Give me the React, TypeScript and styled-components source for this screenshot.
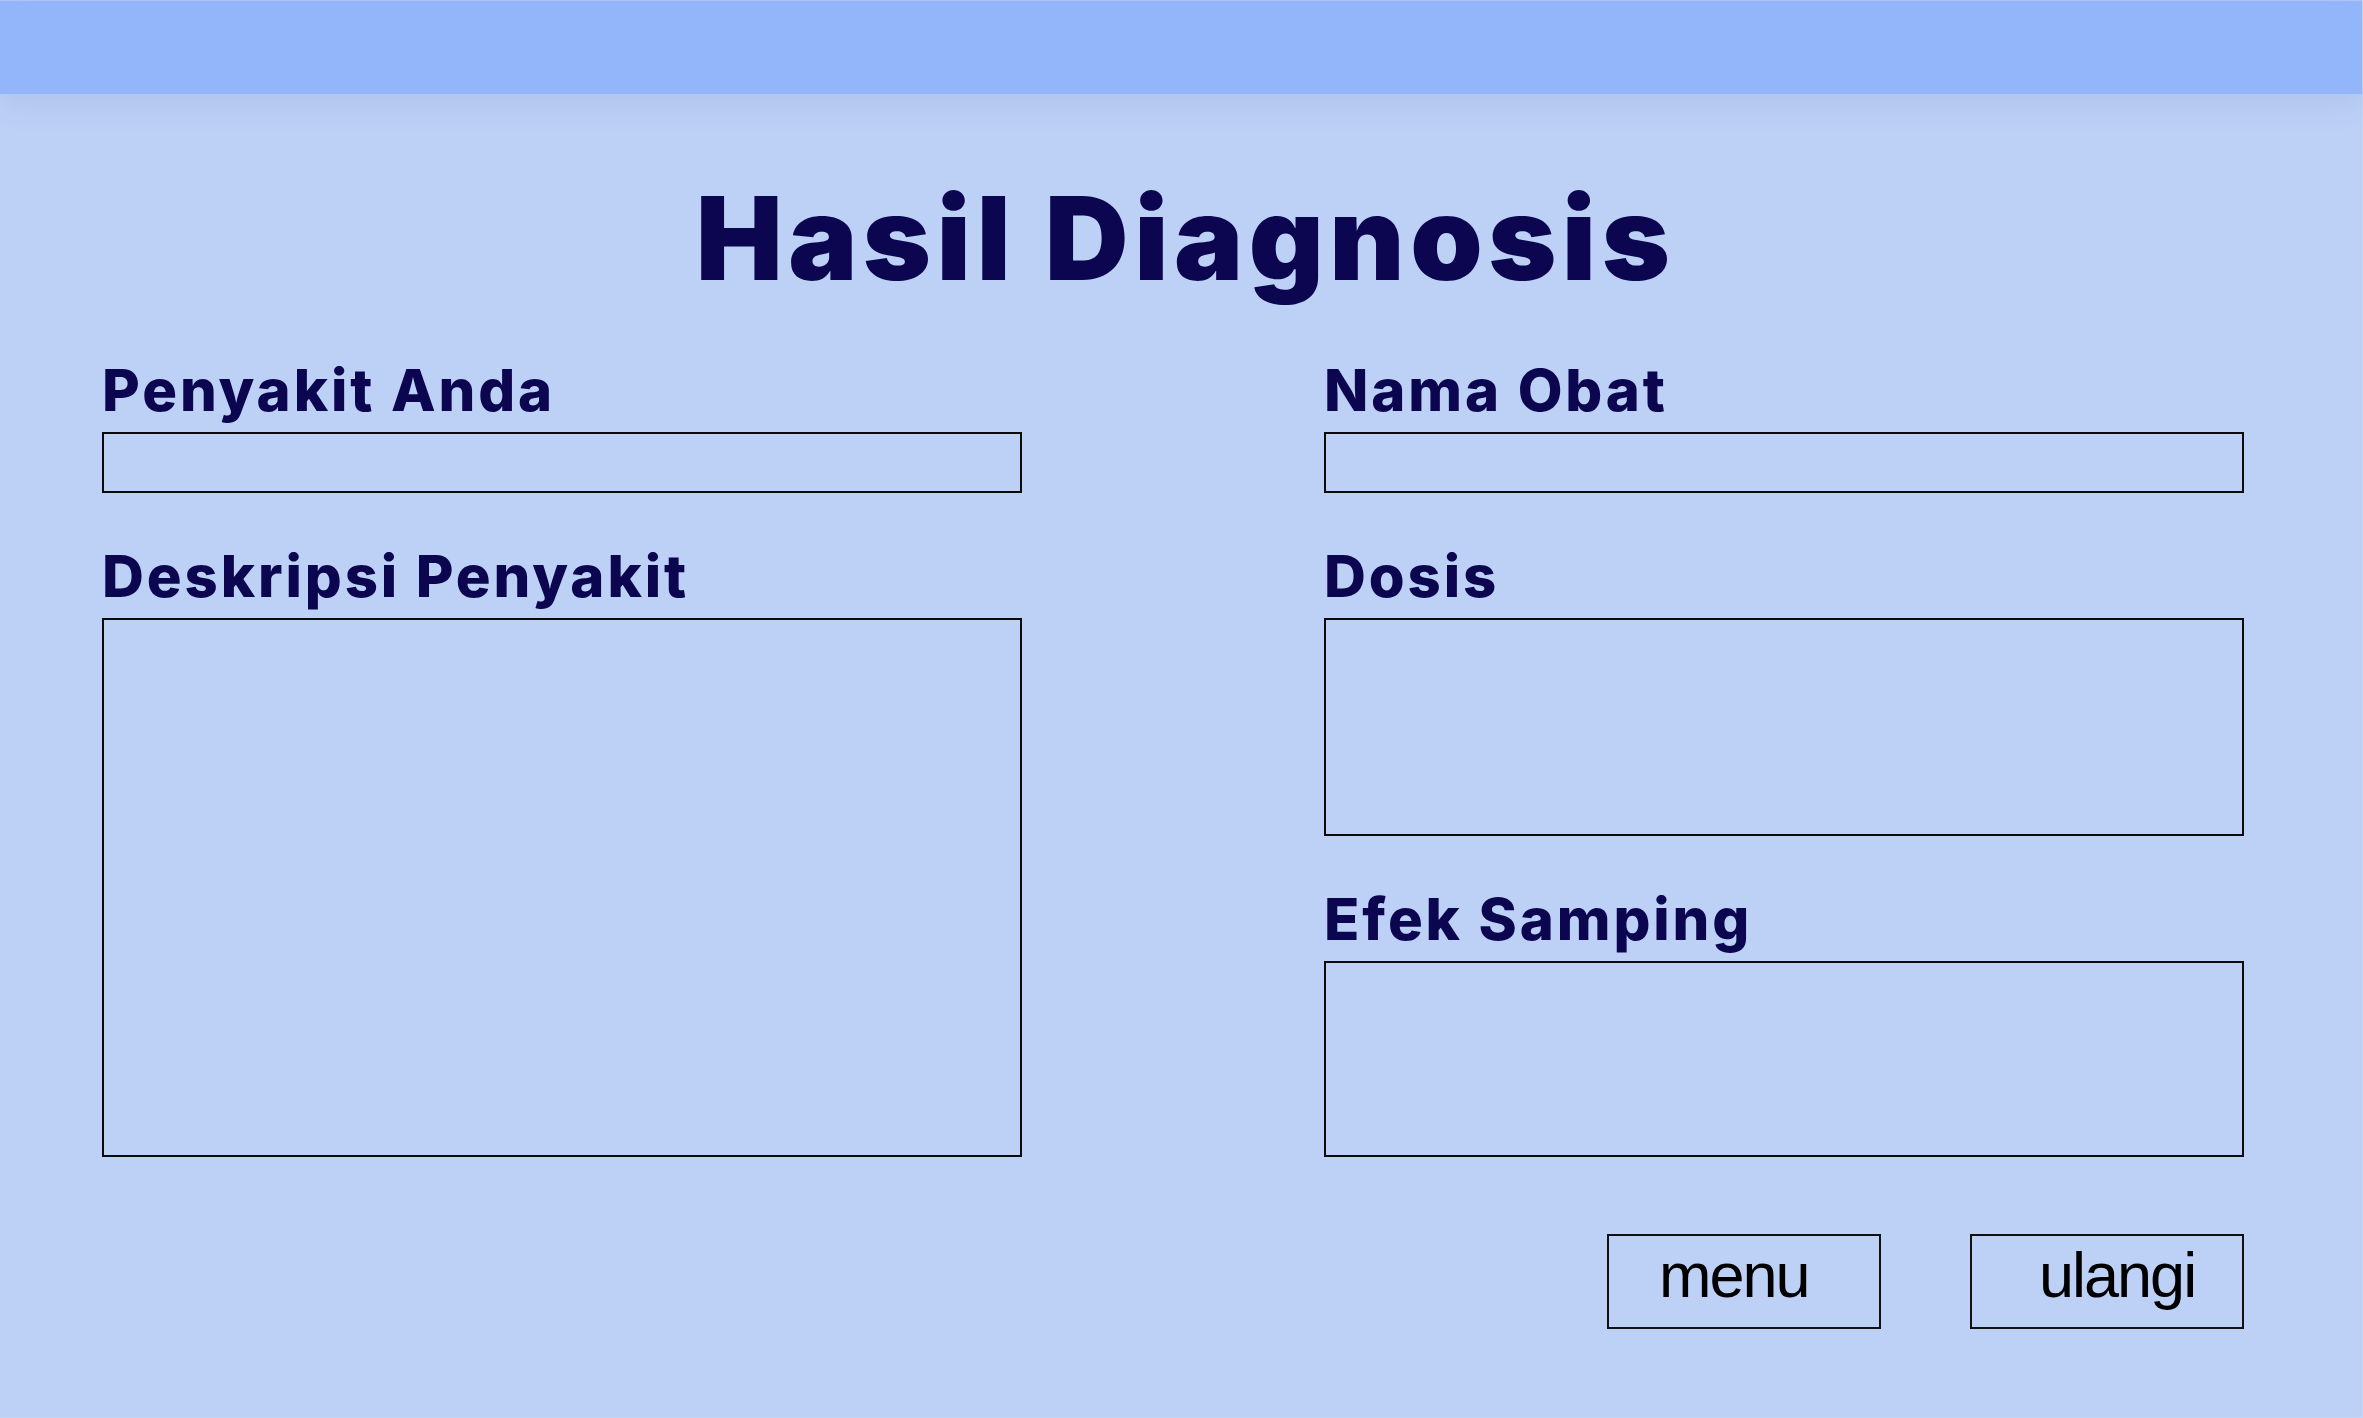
import React from "react";
import styled, { createGlobalStyle } from "styled-components";

const GlobalStyle = createGlobalStyle`
  html, body {
    margin: 0;
    padding: 0;
    background: #bdd1f7;
  }
  * { box-sizing: border-box; }
`;

const Page = styled.div`
  width: 2363px;
  min-height: 1418px;
  background: #bdd1f7;
  border-top: 1px solid #b4caf5;
  border-right: 1px solid #c4d6f8;
  border-bottom: 1px solid #c4d6f8;
  display: flex;
  flex-direction: column;
`;

const Header = styled.header`
  height: 93px;
  background: #93b5fa;
  box-shadow: 0 8px 30px rgba(60, 80, 140, 0.12);
  position: relative;
  z-index: 1;
`;

const Main = styled.main`
  display: flex;
  flex-direction: column;
  padding: 86px 0 0 102px;
`;

const Title = styled.h1`
  margin: 0;
  width: 2161px;
  padding-left: 6px;
  text-align: center;
  font-family: Inter, "Liberation Sans", sans-serif;
  font-weight: 900;
  font-size: 116px;
  line-height: 1;
  letter-spacing: 5.5px;
  color: #0c0650;
`;

const Grid = styled.div`
  display: grid;
  grid-template-columns: 920px 920px;
  column-gap: 302px;
  margin-top: 65px;
`;

const Column = styled.div`
  display: flex;
  flex-direction: column;
  gap: 54px;
`;

const Field = styled.div`
  display: flex;
  flex-direction: column;
  gap: 13px;
`;

const Label = styled.label`
  font-family: Inter, "Liberation Sans", sans-serif;
  font-weight: 800;
  font-size: 58px;
  line-height: 1;
  letter-spacing: 2.9px;
  color: #0c0650;
  white-space: nowrap;
`;

const Box = styled.div<{ $h: number }>`
  width: 100%;
  height: ${(p) => p.$h}px;
  border: 2px solid #0a0a0a;
  background: transparent;
`;

const Actions = styled.div`
  width: 2142px;
  display: flex;
  justify-content: flex-end;
  gap: 89px;
  margin-top: 77px;
`;

const Button = styled.button<{ $indent: number }>`
  width: 274px;
  height: 95px;
  border: 2px solid #111;
  background: transparent;
  padding: 0 0 13px ${(p) => p.$indent}px;
  text-align: left;
  font-family: "Liberation Sans", Arial, sans-serif;
  font-size: 63px;
  line-height: 1;
  letter-spacing: -2px;
  color: #000;
  cursor: pointer;
`;

export default function App() {
  return (
    <>
      <GlobalStyle />
      <Page>
        <Header />
        <Main>
          <Title>Hasil Diagnosis</Title>
          <Grid>
            <Column>
              <Field>
                <Label>Penyakit Anda</Label>
                <Box $h={61} />
              </Field>
              <Field>
                <Label>Deskripsi Penyakit</Label>
                <Box $h={539} />
              </Field>
            </Column>
            <Column>
              <Field>
                <Label>Nama Obat</Label>
                <Box $h={61} />
              </Field>
              <Field>
                <Label>Dosis</Label>
                <Box $h={218} />
              </Field>
              <Field>
                <Label>Efek Samping</Label>
                <Box $h={196} />
              </Field>
            </Column>
          </Grid>
          <Actions>
            <Button $indent={50}>menu</Button>
            <Button $indent={67}>ulangi</Button>
          </Actions>
        </Main>
      </Page>
    </>
  );
}
